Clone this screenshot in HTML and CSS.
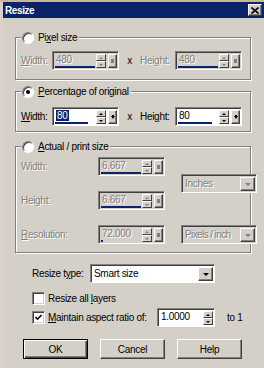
FILE: index.html
```html
<!DOCTYPE html>
<html>
    <head>
        <title>Resize</title>
        <link rel="stylesheet" href="styles.css">
    </head>
    <body>
        <div class="window">
            <div class="titlebar">
                <span class="title">Resize</span>
                <span class="close-btn">
                    <svg width="8" height="7" viewBox="0 0 8 7"><path d="M0.5 0.5 L7.5 6.5 M7.5 0.5 L0.5 6.5" stroke="#000" stroke-width="1.6"/></svg>
                </span>
            </div>
            <div class="content">

                <div class="group group-pixel">
                    <div class="legend"><span class="radio"></span><span>Pi<u>x</u>el size</span></div>
                    <div class="row">
                        <span class="lbl off"><u>W</u>idth:</span>
                        <div class="spin disabled">
                            <div class="field"><span class="val">480</span><span class="track" style="width:40px"></span></div>
                            <div class="arrows"><span class="up"></span><span class="down"></span></div>
                            <span class="pop"></span>
                        </div>
                        <span class="times">x</span>
                        <span class="lbl lbl-h off">Hei<u>g</u>ht:</span>
                        <div class="spin disabled">
                            <div class="field"><span class="val">480</span><span class="track" style="width:40px"></span></div>
                            <div class="arrows"><span class="up"></span><span class="down"></span></div>
                            <span class="pop"></span>
                        </div>
                    </div>
                </div>

                <div class="group group-percent">
                    <div class="legend"><span class="radio checked"></span><span><u>P</u>ercentage of original</span></div>
                    <div class="row">
                        <span class="lbl"><u>W</u>idth:</span>
                        <div class="spin">
                            <div class="field"><span class="val"><span class="sel">80</span></span><span class="track" style="width:33px"></span></div>
                            <div class="arrows"><span class="up"></span><span class="down"></span></div>
                            <span class="pop"></span>
                        </div>
                        <span class="times">x</span>
                        <span class="lbl lbl-h">Hei<u>g</u>ht:</span>
                        <div class="spin">
                            <div class="field"><span class="val">80</span><span class="track" style="width:34px"></span></div>
                            <div class="arrows"><span class="up"></span><span class="down"></span></div>
                            <span class="pop"></span>
                        </div>
                    </div>
                </div>

                <div class="group group-actual">
                    <div class="legend"><span class="radio"></span><span><u>A</u>ctual / print size</span></div>
                    <div class="size-grid">
                        <span class="off">Width:</span>
                        <div class="spin disabled">
                            <div class="field"><span class="val">6.667</span><span class="track" style="width:40px"></span></div>
                            <div class="arrows"><span class="up"></span><span class="down"></span></div>
                            <span class="pop"></span>
                        </div>
                        <div class="combo disabled units">
                            <span class="combo-text off">Inches</span>
                            <span class="combo-btn"></span>
                        </div>
                        <span class="off">Height:</span>
                        <div class="spin disabled">
                            <div class="field"><span class="val">6.667</span><span class="track" style="width:40px"></span></div>
                            <div class="arrows"><span class="up"></span><span class="down"></span></div>
                            <span class="pop"></span>
                        </div>
                        <span class="off"><u>R</u>esolution:</span>
                        <div class="spin disabled">
                            <div class="field"><span class="val">72.000</span><span class="track" style="width:2px"></span></div>
                            <div class="arrows"><span class="up"></span><span class="down"></span></div>
                            <span class="pop"></span>
                        </div>
                        <div class="combo disabled">
                            <span class="combo-text off tight">Pixels / inch</span>
                            <span class="combo-btn"></span>
                        </div>
                    </div>
                </div>

                <div class="options">
                    <div class="opt-row type-row">
                        <span class="type-lbl">Resize t<u>y</u>pe:</span>
                        <div class="combo type-combo">
                            <span class="combo-text">Smart size</span>
                            <span class="combo-btn"></span>
                        </div>
                    </div>
                    <div class="opt-row check-row">
                        <span class="check"></span>
                        <span>Resize all <u>l</u>ayers</span>
                    </div>
                    <div class="opt-row aspect-row">
                        <span class="check">
                            <svg width="7" height="7" viewBox="0 0 7 7"><path d="M0.5 3 L2.5 5.2 L6.5 1" fill="none" stroke="#000" stroke-width="1.6"/></svg>
                        </span>
                        <span class="aspect-lbl"><u>M</u>aintain aspect ratio of:</span>
                        <div class="spin ratio">
                            <div class="field"><span class="val">1.0000</span></div>
                            <div class="arrows"><span class="up"></span><span class="down"></span></div>
                        </div>
                        <span class="to-one">to 1</span>
                    </div>
                </div>

                <div class="buttons">
                    <button class="btn btn-default">OK</button>
                    <button class="btn">Cancel</button>
                    <button class="btn">Help</button>
                </div>
            </div>
        </div>
    </body>
</html>
```

FILE: styles.css
```css
body
{
    margin: 0;
    background-color: #c9b98f;
    font-family: "Liberation Sans", Arial, sans-serif;
    font-size: 10px;
    letter-spacing: -0.3px;
    color: #000;
}
.window
{
    margin-top: 2px;
    height: 366px;
    border-left: 3px solid #dccfcf;
    background-color: #d4d0c8;
    overflow: hidden;
}
.titlebar
{
    height: 16px;
    background-color: #0a246a;
    display: flex;
    align-items: center;
    justify-content: space-between;
    padding: 0 2px;
}
.title
{
    color: #fff;
    font-weight: bold;
    letter-spacing: -0.4px;
}
.close-btn
{
    width: 14px;
    height: 12px;
    box-sizing: border-box;
    background: #d4d0c8;
    border: 1px solid;
    border-color: #fff #404040 #404040 #fff;
    box-shadow: inset -1px -1px #808080;
    display: flex;
    align-items: center;
    justify-content: center;
}
.content
{
    padding-left: 12px;
}

/* group boxes */
.group
{
    position: relative;
    width: 236px;
    box-sizing: border-box;
    border: 1px solid #808080;
    box-shadow: inset 1px 1px #fff, 1px 1px #fff;
    padding-left: 5px;
}
.group-pixel
{
    margin-top: 19px;
    padding-top: 13px;
    padding-bottom: 9px;
}
.group-percent
{
    margin-top: 11px;
    padding-top: 15px;
    padding-bottom: 5px;
}
.group-actual
{
    margin-top: 14px;
    padding-top: 10px;
    padding-bottom: 8px;
}
.legend
{
    position: absolute;
    top: -7px;
    left: 5px;
    height: 13px;
    padding: 0 2px 0 1px;
    background: #d4d0c8;
    display: flex;
    align-items: center;
    gap: 4px;
}
.radio
{
    width: 12px;
    height: 12px;
    box-sizing: border-box;
    border-radius: 50%;
    border: 1px solid;
    border-color: #808080 #fff #fff #808080;
    box-shadow: inset 1px 1px #404040;
    background: #fff;
    display: flex;
    align-items: center;
    justify-content: center;
}
.radio.checked::after
{
    content: "";
    width: 4px;
    height: 4px;
    border-radius: 50%;
    background: #000;
}
.off
{
    color: #808080;
    text-shadow: 1px 1px 0 #fff;
}
.row
{
    display: flex;
    align-items: center;
    height: 19px;
}
.lbl
{
    width: 31px;
}
.lbl-h
{
    width: 35px;
}
.times
{
    width: 21px;
    text-align: center;
}

/* spin edit */
.spin
{
    width: 67px;
    height: 19px;
    box-sizing: border-box;
    display: flex;
    gap: 1px;
    border: 1px solid;
    border-color: #808080 #fff #fff #808080;
    box-shadow: inset 1px 1px #404040;
    background: #fff;
    padding: 2px 1px 1px 2px;
}
.spin.disabled
{
    background: #d4d0c8;
}
.field
{
    flex: 1;
    display: flex;
    flex-direction: column;
    justify-content: space-between;
}
.val
{
    line-height: 12px;
    padding-left: 1px;
}
.disabled .val
{
    color: #808080;
    text-shadow: 1px 1px 0 #fff;
}
.sel
{
    background: #0a246a;
    color: #fff;
    padding: 0 1px;
}
.track
{
    height: 2px;
    background: #0a246a;
}
.arrows
{
    width: 10px;
    display: flex;
    flex-direction: column;
}
.arrows span, .pop, .combo-btn
{
    background: #d4d0c8;
    box-sizing: border-box;
    border: 1px solid;
    border-color: #fff #404040 #404040 #fff;
    display: flex;
    align-items: center;
    justify-content: center;
}
.arrows span
{
    flex: 1;
}
.arrows .up::after
{
    content: "";
    border-left: 2px solid transparent;
    border-right: 2px solid transparent;
    border-bottom: 2px solid #000;
}
.arrows .down::after
{
    content: "";
    border-left: 2px solid transparent;
    border-right: 2px solid transparent;
    border-top: 2px solid #000;
}
.disabled .arrows .up::after
{
    border-bottom-color: #808080;
}
.disabled .arrows .down::after
{
    border-top-color: #808080;
}
.pop
{
    width: 9px;
    margin-left: 1px;
    box-shadow: inset -1px -1px #808080;
}
.pop::after
{
    content: "";
    border-left: 2px solid transparent;
    border-right: 2px solid transparent;
    border-top: 3px solid #000;
    box-shadow: 0 -2px 0 -1px #000;
}
.disabled .pop::after
{
    width: 3px;
    height: 4px;
    border: none;
    background: #808080;
    box-shadow: none;
}

/* combo box */
.combo
{
    display: flex;
    height: 19px;
    box-sizing: border-box;
    border: 1px solid;
    border-color: #808080 #fff #fff #808080;
    box-shadow: inset 1px 1px #404040;
    background: #fff;
    padding: 2px 1px 1px 2px;
}
.combo.disabled
{
    background: #d4d0c8;
}
.combo-text
{
    flex: 1;
    line-height: 14px;
    padding-left: 1px;
    white-space: nowrap;
    overflow: hidden;
}
.tight
{
    letter-spacing: -0.6px;
}
.combo-btn
{
    width: 15px;
    flex-shrink: 0;
    box-shadow: inset -1px -1px #808080;
}
.combo-btn::after
{
    content: "";
    border-left: 3px solid transparent;
    border-right: 3px solid transparent;
    border-top: 3px solid #000;
}
.disabled .combo-btn::after
{
    border-top-color: #808080;
}

/* actual size grid */
.size-grid
{
    display: grid;
    grid-template-columns: 61px 67px 76px;
    grid-template-rows: 19px 19px 19px;
    column-gap: 16px;
    row-gap: 15px;
    align-items: center;
}
.units
{
    grid-column: 3;
    grid-row: 1 / span 2;
}
.size-grid .combo
{
    grid-column: 3;
}

/* options below */
.options
{
    padding-left: 17px;
}
.opt-row
{
    display: flex;
    align-items: center;
}
.type-row
{
    margin-top: 11px;
    height: 19px;
}
.type-lbl
{
    width: 58px;
}
.type-combo
{
    width: 125px;
}
.check-row
{
    margin-top: 9px;
    height: 13px;
    gap: 3px;
}
.aspect-row
{
    margin-top: 3px;
    height: 19px;
    gap: 3px;
}
.check
{
    width: 13px;
    height: 13px;
    box-sizing: border-box;
    border: 1px solid;
    border-color: #808080 #fff #fff #808080;
    box-shadow: inset 1px 1px #404040, inset -1px -1px #d4d0c8;
    background: #fff;
    display: flex;
    align-items: center;
    justify-content: center;
}
.aspect-lbl
{
    width: 106px;
}
.ratio
{
    width: 58px;
}
.to-one
{
    margin-left: 9px;
}

/* buttons */
.buttons
{
    display: flex;
    gap: 12px;
    margin-top: 12px;
    padding-left: 8px;
}
.btn
{
    width: 65px;
    height: 20px;
    box-sizing: border-box;
    padding: 0;
    background: #d4d0c8;
    border: 1px solid;
    border-color: #fff #404040 #404040 #fff;
    box-shadow: inset -1px -1px #808080;
    font: inherit;
    letter-spacing: inherit;
    color: #000;
}
.btn-default
{
    border-color: #000;
    box-shadow: inset 1px 1px #fff, inset -1px -1px #404040, inset -2px -2px #808080;
}
```
